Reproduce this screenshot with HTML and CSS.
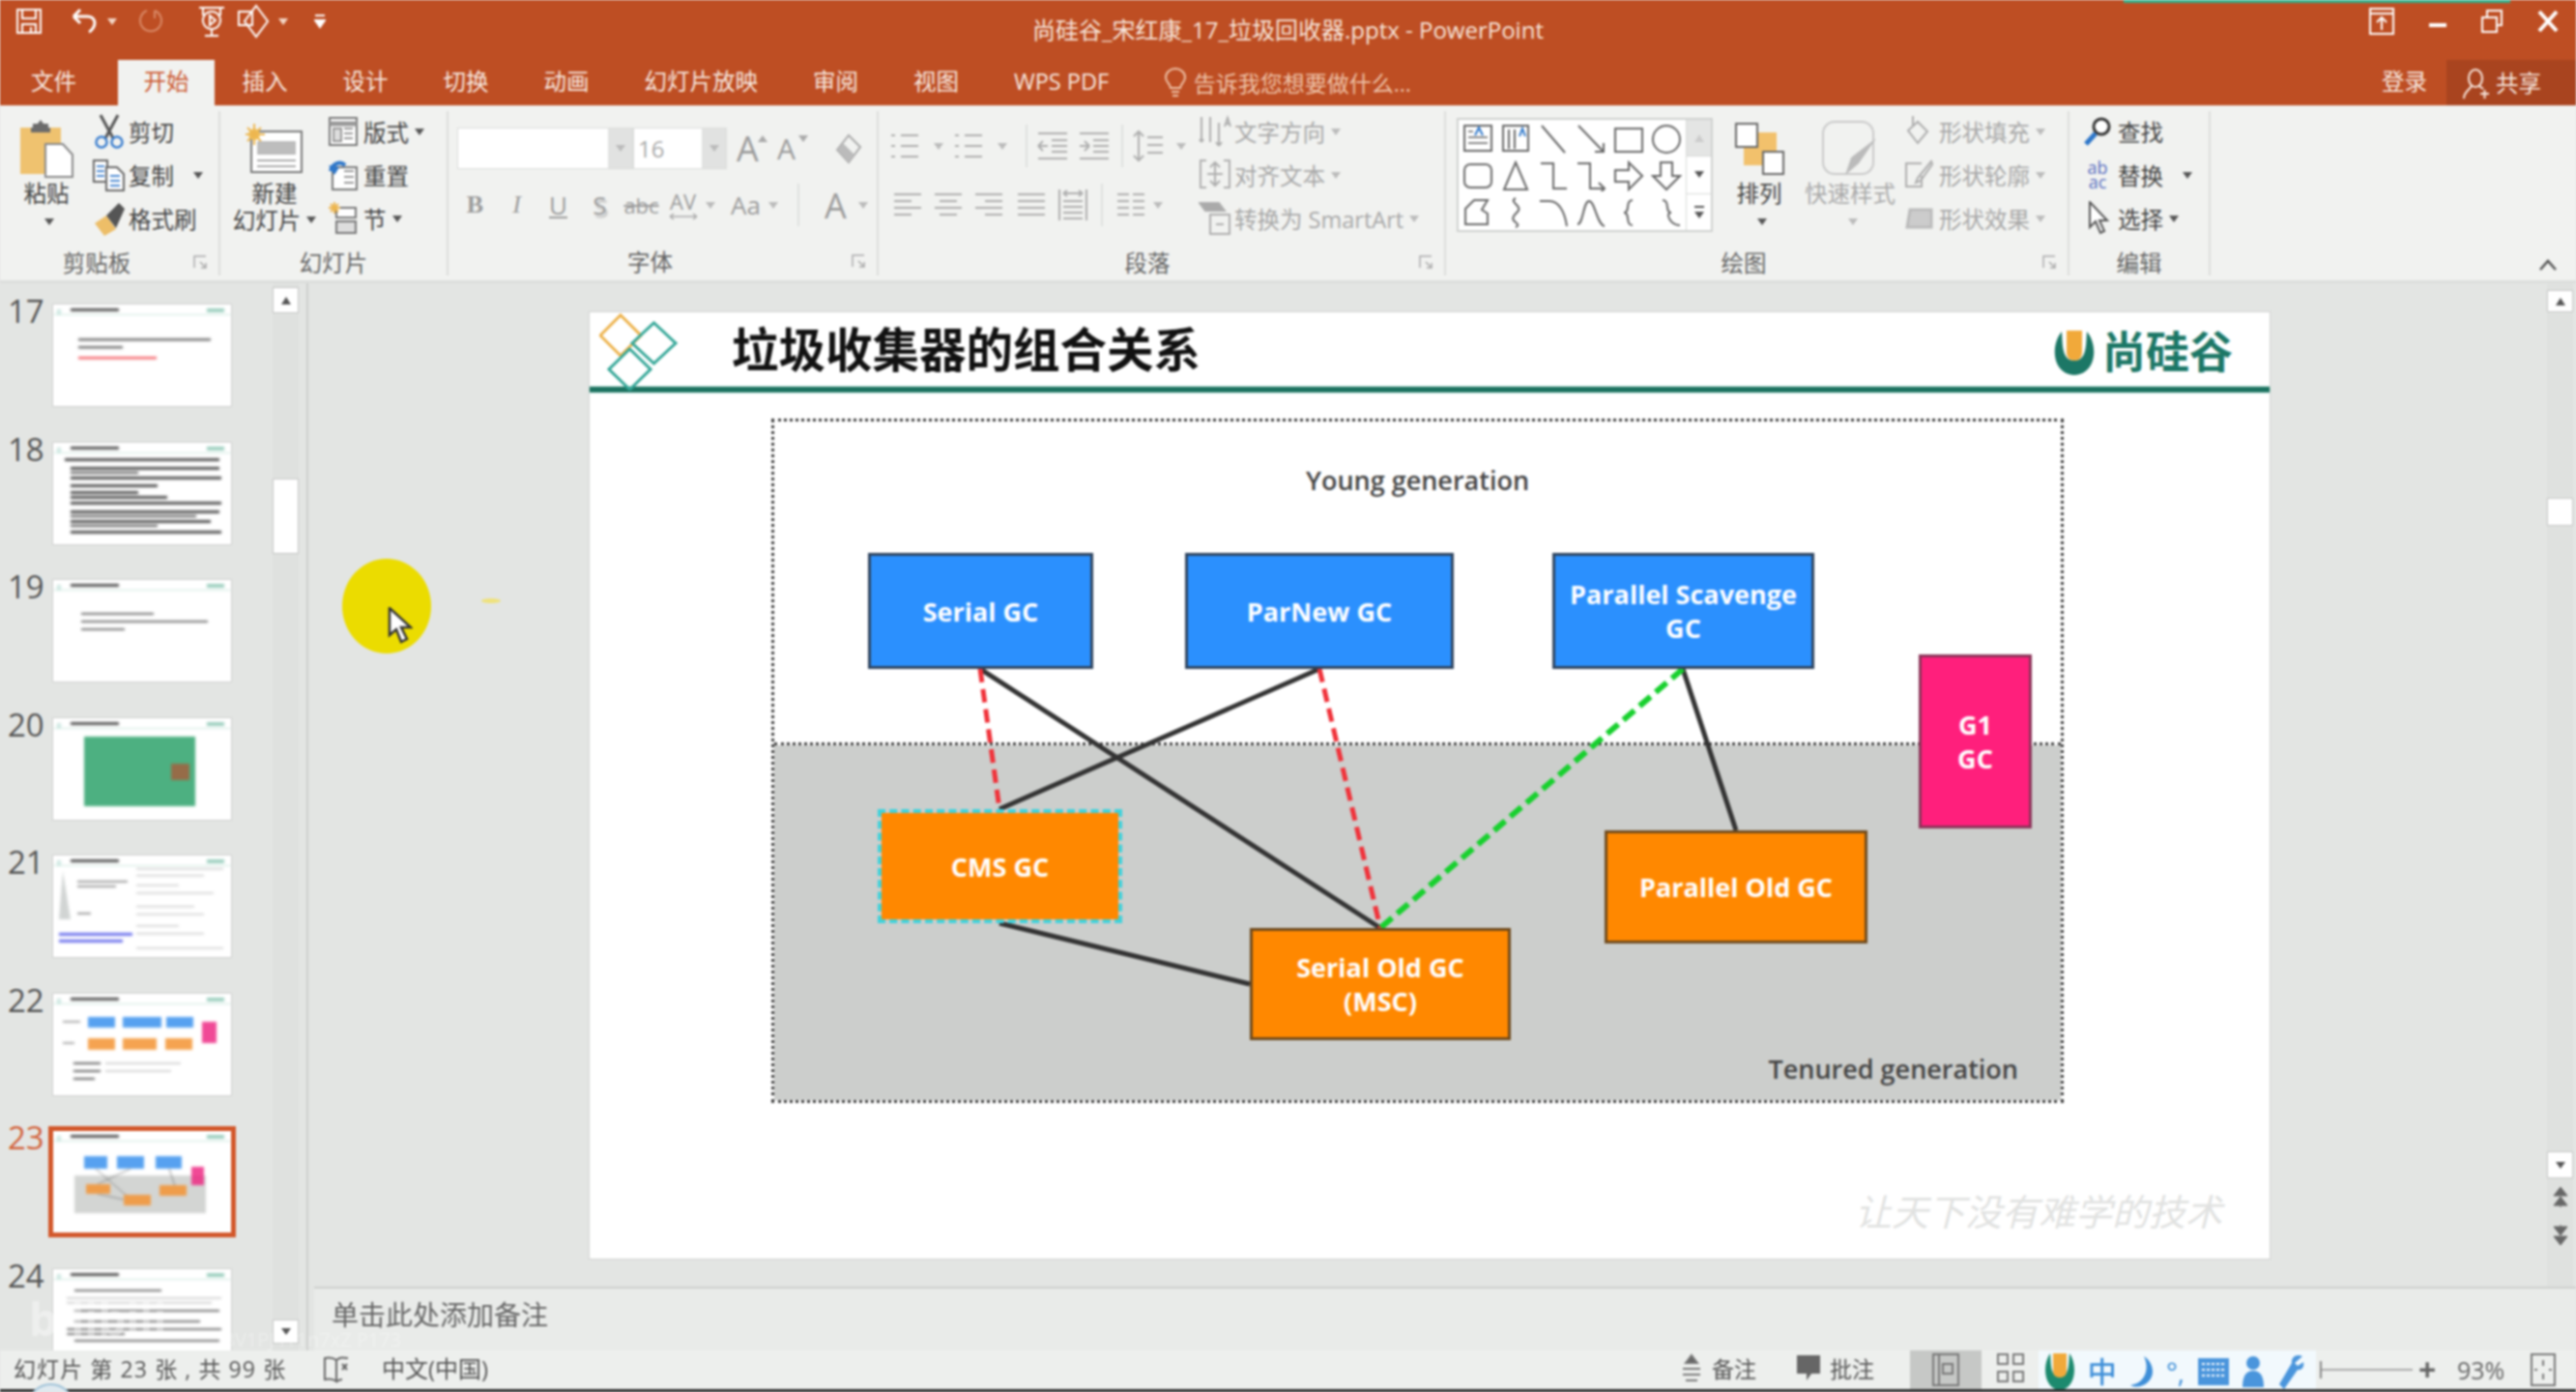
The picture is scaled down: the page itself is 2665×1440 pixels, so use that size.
FILE: index.html
```html
<!DOCTYPE html>
<html lang="zh-CN">
<head>
  <meta charset="UTF-8">
  <title>尚硅谷_宋红康_17_垃圾回收器.pptx - PowerPoint</title>
  <link rel="stylesheet" href="styles.css">
</head>
<body>
<svg class="defs" width="0" height="0">
  <symbol id="thumb-head" viewBox="0 0 184 105">
    <path d="M6 5l2 2-2 3-2-3z" fill="none" stroke="#7fc4b4"/>
    <rect x="18" y="4" width="50" height="3" fill="#333"/>
    <rect x="0" y="10" width="184" height="1" fill="#bfe0d6"/>
    <rect x="159" y="4" width="18" height="4" fill="#8cc7b4"/>
  </symbol>
</svg>
<div class="app">
  <header class="titlebar">
    <div class="qat">
      <svg class="ic" width="28" height="28" viewBox="0 0 28 28"><path d="M2 2h24v24H2zM7 2v9h14V2M7 26v-9h14v9M16 20v6"/></svg>
      <svg class="ic undo" width="30" height="30" viewBox="0 0 30 30"><path d="M4 10h14c6 0 8 4 8 7s-3 8-6 9M4 10l7-7M4 10l7 7" stroke-width="3"/></svg>
      <i class="tiny-caret"></i>
      <svg class="ic redo" width="26" height="30" viewBox="0 0 26 30"><path d="M17 4a11 11 0 1 1-8 0M17 4v8"/></svg>
      <svg class="ic show" width="30" height="32" viewBox="0 0 30 32"><path d="M2 2h26M6 3v7M24 3v7M15 24a9 9 0 1 0-.1 0zM13 10l6 5-6 5zM15 24v6M8 31h14"/></svg>
      <svg class="ic" width="34" height="36" viewBox="0 0 34 36"><path d="M2 8h14v14H2zM20 2l12 16-12 16L8 18z"/></svg>
      <i class="tiny-caret"></i>
      <svg class="ic more" width="12" height="18" viewBox="0 0 12 18"><path d="M1 3h10" /><path d="M1 8h10l-5 7z" fill="#fff"/></svg>
    </div>
    <div class="doc-title">尚硅谷_宋红康_17_垃圾回收器.pptx - PowerPoint</div>
    <div class="win-btns">
      <svg class="ic" width="28" height="30" viewBox="0 0 28 30"><path d="M2 2h24v26H2zM2 7h24M14 24V12M9 16l5-5 5 5"/></svg>
      <svg class="ic" width="20" height="30" viewBox="0 0 20 30"><path d="M1 19h18" stroke-width="4"/></svg>
      <svg class="ic" width="24" height="30" viewBox="0 0 24 30"><path d="M2 11h15v15H2zM7 11V4h15v15h-5"/></svg>
      <svg class="ic" width="24" height="30" viewBox="0 0 24 30"><path d="M3 5l18 20M21 5L3 25" stroke-width="4"/></svg>
    </div>
  </header>
  <nav class="tabs">
    <span class="tab tab-file">文件</span>
    <span class="tab tab-on">开始</span>
    <span class="tab">插入</span>
    <span class="tab">设计</span>
    <span class="tab">切换</span>
    <span class="tab">动画</span>
    <span class="tab">幻灯片放映</span>
    <span class="tab">审阅</span>
    <span class="tab">视图</span>
    <span class="tab">WPS PDF</span>
    <span class="tell">
      <svg class="ic" width="24" height="32" viewBox="0 0 24 32"><path d="M7 21c0-4-5-6-5-11a10 9 0 0 1 20 0c0 5-5 7-5 11zM8 25h8M9 29h6"/></svg>
      告诉我您想要做什么...
    </span>
    <span class="login">登录</span>
    <span class="share">
      <svg class="ic" width="30" height="34" viewBox="0 0 30 34"><path d="M8 12a7 9 0 1 0 14 0a7 9 0 1 0-14 0M11 19c0 4-8 6-8 14M19 19c0 2 3 3 4 4M20 28h9M24.500 24v9"/></svg>
      共享
    </span>
  </nav>

  <section class="ribbon">
    <div class="group g-clip">
      <div class="group-body">
        <div class="big big-paste">
          <svg width="56" height="62" viewBox="0 0 56 62"><path d="M1 9h42v48H1z" fill="#EFC26F"/><path d="M14 9V5h5l3-4 3 4h5v4h2v5H12V9z" fill="#6b6b6b"/><path d="M27 26h18l10 11v23H27z" fill="#fff" stroke="#888" stroke-width="2"/></svg>
          <span class="big-label">粘贴</span>
          <i class="caret"></i>
        </div>
        <div class="col">
          <div class="sm"><svg width="34" height="36" viewBox="0 0 34 36" class="sm-ic"><path d="M8 1l13 24M26 1L13 25" stroke="#555" stroke-width="3" fill="none"/><circle cx="9" cy="29" r="5.500" fill="none" stroke="#3C7FCF" stroke-width="2.500"/><circle cx="25" cy="29" r="5.500" fill="none" stroke="#3C7FCF" stroke-width="2.500"/></svg>剪切</div>
          <div class="sm"><svg width="34" height="34" viewBox="0 0 34 34" class="sm-ic"><path d="M1 2h14v22H1z" fill="#fff" stroke="#666" stroke-width="2"/><path d="M14 9h11l7 7v17H14z" fill="#fff" stroke="#666" stroke-width="2"/><path d="M4 8h8M4 13h8M4 18h8M18 18h10M18 23h10M18 28h10" stroke="#4D8AD2" stroke-width="2"/></svg>复制<i class="caret caret-gap"></i></div>
          <div class="sm"><svg width="34" height="38" viewBox="0 0 34 38" class="sm-ic"><path d="M2 24l12-8 10 14-12 7z" fill="#EDBE68"/><path d="M14 16L27 3l6 6-9 20z" fill="#555"/></svg>格式刷</div>
        </div>
      </div>
      <div class="group-label has-launcher"><span>剪贴板</span><svg width="14" height="14" viewBox="0 0 14 14" class="launcher"><path d="M1 13V1h12M7 7l6 6M13 8v5H8"/></svg></div>
    </div>

    <div class="group g-slides">
      <div class="group-body">
        <div class="big big-new">
          <svg width="60" height="52" viewBox="0 0 60 52"><path d="M6 8h52v42H6z" fill="#fff" stroke="#777" stroke-width="2"/><path d="M12 18h40v14H12z" fill="#BDBDBD"/><path d="M12 38h40M12 44h40" stroke="#aaa" stroke-width="2"/><circle cx="9" cy="11" r="6" fill="#F0C35F"/><path d="M9 0v22M0 11h20M2 4l14 14M16 4L2 18" stroke="#EDB64F" stroke-width="2"/></svg>
          <span class="big-label">新建</span>
          <span class="big-label second">幻灯片<i class="caret"></i></span>
        </div>
        <div class="col">
          <div class="sm"><svg width="30" height="30" viewBox="0 0 30 30" class="sm-ic"><path d="M1 1h28v28H1z" fill="#fff" stroke="#777" stroke-width="2"/><path d="M1 7h28" stroke="#999" stroke-width="5"/><path d="M5 12h8v13H5zM16 12h9M16 17h9M16 22h9" fill="#ddd" stroke="#999" stroke-width="2"/></svg>版式<i class="caret"></i></div>
          <div class="sm"><svg width="30" height="32" viewBox="0 0 30 32" class="sm-ic"><path d="M4 8h25v23H4z" fill="#fff" stroke="#777" stroke-width="2"/><path d="M16 12h10M16 18h10M16 24h10" stroke="#999" stroke-width="2"/><path d="M2 12C4 4 12 1 17 6" fill="none" stroke="#2D76C9" stroke-width="4"/><path d="M0 6l6 10 5-8z" fill="#2D76C9"/></svg>重置</div>
          <div class="sm"><svg width="30" height="34" viewBox="0 0 30 34" class="sm-ic"><path d="M8 6h20v10H8z" fill="#fff" stroke="#777" stroke-width="2"/><path d="M8 20h20v12H8z" fill="#ddd" stroke="#777" stroke-width="2"/><path d="M6 0v12M0 6h12M2 2l8 8M10 2l-8 8" stroke="#EDB64F" stroke-width="2"/></svg>节<i class="caret"></i></div>
        </div>
      </div>
      <div class="group-label"><span>幻灯片</span></div>
    </div>

    <div class="group g-font">
      <div class="group-body stack">
        <div class="font-row">
          <div class="combo combo-name"><i class="caret dim"></i></div>
          <div class="combo combo-size"><span>16</span><i class="caret dim"></i></div>
          <span class="grow">A<i></i></span>
          <span class="grow small">A<i class="down"></i></span>
          <svg width="32" height="34" viewBox="0 0 32 34" class="clear-ic"><path d="M4 18L16 3l12 12-12 16z" fill="none" stroke="#aaa" stroke-width="2"/><path d="M4 18l12 13 6-8-12-12z" fill="#bbb"/></svg>
        </div>
        <div class="font-row second-row">
          <b class="fbtn">B</b>
          <em class="fbtn">I</em>
          <u class="fbtn">U</u>
          <span class="fbtn shadowed">S</span>
          <s class="fbtn abc">abc</s>
          <span class="fbtn av">AV<svg width="30" height="8" viewBox="0 0 30 8"><path d="M1 4h28M1 4l4-3M1 4l4 3M29 4l-4-3M29 4l-4 3" fill="none" stroke="#aaa" stroke-width="1.500"/></svg></span>
          <i class="caret dim fcaret"></i>
          <span class="fbtn aa">Aa</span>
          <i class="caret dim fcaret"></i>
          <span class="vsep font-sep"></span>
          <span class="fbtn bigger">A</span>
          <i class="caret dim fcaret"></i>
        </div>
      </div>
      <div class="group-label has-launcher"><span>字体</span><svg width="14" height="14" viewBox="0 0 14 14" class="launcher"><path d="M1 13V1h12M7 7l6 6M13 8v5H8"/></svg></div>
    </div>

    <div class="group g-para">
      <div class="group-body">
        <div class="para-left">
          <div class="para-row">
            <svg class="pi" width="36" height="30" viewBox="0 0 36 30"><path d="M2 4h4M12 4h18M2 15h4M12 15h18M2 26h4M12 26h18"/></svg><i class="caret dim pcaret"></i>
            <svg class="pi" width="36" height="30" viewBox="0 0 36 30"><path d="M2 4h4M12 4h18M2 15h4M12 15h18M2 26h4M12 26h18"/></svg><i class="caret dim pcaret"></i>
            <span class="vsep"></span>
            <svg class="pi" width="36" height="30" viewBox="0 0 36 30"><path d="M2 2h30M16 9h16M16 15h16M16 21h16M2 28h30M2 15h10M2 15l5-5M2 15l5 5"/></svg>
            <svg class="pi gap7" width="36" height="30" viewBox="0 0 36 30"><path d="M2 2h30M16 9h16M16 15h16M16 21h16M2 28h30M2 15h10M12 15l-5-5M12 15l-5 5"/></svg>
            <span class="vsep"></span>
            <svg class="pi" width="36" height="34" viewBox="0 0 36 34"><path d="M16 8h16M16 16h16M16 24h16M7 2v30M2 7l5-5 5 5M2 27l5 5 5-5"/></svg><i class="caret dim pcaret"></i>
          </div>
          <div class="para-row row-two">
            <svg class="pi" width="36" height="30" viewBox="0 0 36 30"><path d="M5 4h28M5 11h18M5 18h28M5 25h18"/></svg>
            <svg class="pi gap7" width="36" height="30" viewBox="0 0 36 30"><path d="M4 4h28M9 11h18M4 18h28M9 25h18"/></svg>
            <svg class="pi gap7" width="36" height="30" viewBox="0 0 36 30"><path d="M3 4h28M13 11h18M3 18h28M13 25h18"/></svg>
            <svg class="pi gap7" width="36" height="30" viewBox="0 0 36 30"><path d="M4 4h28M4 11h28M4 18h28M4 25h28"/></svg>
            <svg class="pi gap7" width="36" height="36" viewBox="0 0 36 36"><path d="M4 2v32M32 2v32M8 6h20M8 6l4-3M8 6l4 3M28 6l-4-3M28 6l-4 3M8 14h20M8 20h20M8 26h20M8 32h20"/></svg>
            <span class="vsep sep-two"></span>
            <svg class="pi" width="36" height="30" viewBox="0 0 36 30"><path d="M4 4h12M20 4h12M4 11h12M20 11h12M4 18h12M20 18h12M4 25h12M20 25h12"/></svg><i class="caret dim pcaret narrow"></i>
          </div>
        </div>
        <div class="col dim-col">
          <div class="sm"><svg class="pi sm-ic" width="34" height="34" viewBox="0 0 34 34"><path d="M3 2v26M12 2v26M21 8v24M21 32l-3-4M21 32l3-4M3 28l-2-3M3 28l2-3M27 12l3-9 3 9M28 9h4"/></svg>文字方向<i class="caret dim"></i></div>
          <div class="sm"><svg class="pi sm-ic" width="34" height="34" viewBox="0 0 34 34"><path d="M8 2H2v28h6M26 2h6v28h-6M17 4v24M12 9l5-5 5 5M12 23l5 5 5-5M9 16h16"/></svg>对齐文本<i class="caret dim"></i></div>
          <div class="sm"><svg class="pi sm-ic" width="34" height="36" viewBox="0 0 34 36"><path d="M1 2h20l6 8H7z" fill="#aaa"/><path d="M12 14h20v20H12zM18 24h8"/></svg>转换为 SmartArt<i class="caret dim"></i></div>
        </div>
      </div>
      <div class="group-label has-launcher"><span>段落</span><svg width="14" height="14" viewBox="0 0 14 14" class="launcher"><path d="M1 13V1h12M7 7l6 6M13 8v5H8"/></svg></div>
    </div>

    <div class="group g-draw">
      <div class="group-body">
        <div class="gallery">
          <div class="gallery-cells">
            <svg class="si" viewBox="0 0 32 32"><path d="M2 2h28v26H2z" fill="#fff"/><path d="M6 8h5M6 14h20M6 20h20" stroke="#888"/><path d="M13 12l4-8 4 8" stroke="#2D76C9"/></svg>
            <svg class="si" viewBox="0 0 32 32"><path d="M3 2h26v26H3zM9 6v20M15 6v20"/><path d="M20 13l3-8 3 8" stroke="#2D76C9"/></svg>
            <svg class="si" viewBox="0 0 32 32"><path d="M4 2l24 28"/></svg>
            <svg class="si" viewBox="0 0 32 32"><path d="M3 2l26 27M29 20v9h-9"/></svg>
            <svg class="si" viewBox="0 0 32 32"><path d="M2 5h28v24H2z"/></svg>
            <svg class="si" viewBox="0 0 32 32"><circle cx="16" cy="16" r="14"/></svg>
            <svg class="si" viewBox="0 0 32 32"><rect x="2" y="4" width="28" height="24" rx="6"/></svg>
            <svg class="si" viewBox="0 0 32 32"><path d="M16 2l12 28H4z"/></svg>
            <svg class="si" viewBox="0 0 32 32"><path d="M3 3h13v26h14"/></svg>
            <svg class="si" viewBox="0 0 32 32"><path d="M2 3h13v26h14M24 23l6 6-6 6"/></svg>
            <svg class="si" viewBox="0 0 32 32"><path d="M2 10h14V2l14 14-14 14v-8H2z"/></svg>
            <svg class="si" viewBox="0 0 32 32"><path d="M10 2h12v14h8L16 30 2 16h8z"/></svg>
            <svg class="si" viewBox="0 0 32 32"><path d="M3 12L12 3h14l-6 10 6 4v11H3z"/></svg>
            <svg class="si" viewBox="0 0 32 32"><path d="M16 1c-8 4 8 8 2 14s-6 8-2 11 2 4 0 5"/></svg>
            <svg class="si" viewBox="0 0 32 32"><path d="M2 4h10c10 0 16 12 18 26"/></svg>
            <svg class="si" viewBox="0 0 32 32"><path d="M2 28C8 28 8 4 14 4s8 24 16 26"/></svg>
            <svg class="si" viewBox="0 0 32 32"><path d="M20 3c-8 0-2 13-9 13 7 0 1 13 9 13"/></svg>
            <svg class="si" viewBox="0 0 32 32"><path d="M12 3c8 0 2 13 9 13-7 0-1 13 9 13"/></svg>
          </div>
          <div class="gallery-scroll">
            <span class="gs gs-up"><i class="caret up dim"></i></span>
            <span class="gs"><i class="caret"></i></span>
            <span class="gs gs-last"><i class="bar"></i><i class="caret"></i></span>
          </div>
        </div>
        <div class="big big-arrange">
          <svg width="52" height="54" viewBox="0 0 52 54"><path d="M10 10h34v34H10z" fill="#F2C16C"/><path d="M2 1h22v24H2zM30 30h21v23H30z" fill="#fff" stroke="#666" stroke-width="2"/></svg>
          <span class="big-label">排列</span>
          <i class="caret"></i>
        </div>
        <div class="big big-style">
          <svg width="58" height="58" viewBox="0 0 58 58" class="qs"><rect x="1" y="1" width="52" height="54" rx="12" fill="none" stroke="#c9c9c9" stroke-width="2"/><path d="M56 18L38 44l-14 12 6-18z" fill="#bbb"/></svg>
          <span class="big-label">快速样式</span>
          <i class="caret dim"></i>
        </div>
        <div class="col dim-col">
          <div class="sm"><svg class="pi sm-ic" width="30" height="34" viewBox="0 0 30 34"><path d="M9 1v10M4 16L14 7l10 10-10 12z"/></svg>形状填充<i class="caret dim"></i></div>
          <div class="sm"><svg class="pi sm-ic" width="30" height="34" viewBox="0 0 30 34"><path d="M18 5H2v24h16V18M28 3L14 20l-2 5 5-2L29 6z"/></svg>形状轮廓<i class="caret dim"></i></div>
          <div class="sm"><svg width="30" height="34" viewBox="0 0 30 34" class="sm-ic"><path d="M6 8h22v18H3z" fill="#ccc" stroke="#bbb" stroke-width="3"/></svg>形状效果<i class="caret dim"></i></div>
        </div>
      </div>
      <div class="group-label has-launcher"><span>绘图</span><svg width="14" height="14" viewBox="0 0 14 14" class="launcher"><path d="M1 13V1h12M7 7l6 6M13 8v5H8"/></svg></div>
    </div>

    <div class="group g-edit">
      <div class="group-body">
        <div class="col">
          <div class="sm"><svg width="30" height="32" viewBox="0 0 30 32" class="sm-ic"><circle cx="19" cy="11" r="8" fill="#fff" stroke="#333" stroke-width="3"/><path d="M13 18L3 29" stroke="#2D76C9" stroke-width="5"/></svg>查找</div>
          <div class="sm"><span class="replace-ic sm-ic">ab<br>ac</span>替换<i class="caret caret-gap"></i></div>
          <div class="sm"><svg width="30" height="36" viewBox="0 0 30 36" class="sm-ic"><path d="M7 1v26l6-6 5 12 4-2-5-11h8z" fill="#fff" stroke="#555" stroke-width="2"/></svg>选择<i class="caret"></i></div>
        </div>
      </div>
      <div class="group-label"><span>编辑</span></div>
    </div>

    <div class="ribbon-end">
      <svg class="collapse" width="20" height="14" viewBox="0 0 20 14"><path d="M2 12l8-9 8 9"/></svg>
    </div>
  </section>

  <main class="main">
    <aside class="thumbs-pane">
      <div class="thumbs">
        <div class="thumb-row"><span class="num">17</span>
          <svg class="thumb" viewBox="0 0 184 105"><use href="#thumb-head"/><g fill="#555"><rect x="26" y="35" width="137" height="2.500"/><rect x="26" y="43" width="46" height="2.500"/></g><rect x="26" y="54" width="81" height="2.500" fill="#F2454D"/></svg></div>
        <div class="thumb-row"><span class="num">18</span>
          <svg class="thumb" viewBox="0 0 184 105"><use href="#thumb-head"/><g fill="#333"><rect x="12" y="16" width="160" height="3"/><rect x="18" y="25" width="154" height="3"/><rect x="18" y="30" width="70" height="2"/><rect x="18" y="35" width="156" height="3"/><rect x="18" y="43" width="90" height="3"/><rect x="18" y="50" width="70" height="3"/><rect x="18" y="55" width="100" height="3"/><rect x="18" y="61" width="156" height="3"/><rect x="18" y="70" width="154" height="3"/><rect x="18" y="75" width="130" height="2"/><rect x="18" y="80" width="145" height="3"/><rect x="18" y="85" width="90" height="2"/><rect x="18" y="91" width="156" height="3"/></g></svg></div>
        <div class="thumb-row"><span class="num">19</span>
          <svg class="thumb" viewBox="0 0 184 105"><use href="#thumb-head"/><g fill="#555"><rect x="29" y="34" width="75" height="2"/><rect x="29" y="42" width="131" height="2"/><rect x="29" y="50" width="45" height="2"/></g></svg></div>
        <div class="thumb-row"><span class="num">20</span>
          <svg class="thumb" viewBox="0 0 184 105"><use href="#thumb-head"/><rect x="32" y="19" width="115" height="72" fill="#2EA36C"/><rect x="122" y="47" width="19" height="17" fill="#A3613F"/></svg></div>
        <div class="thumb-row"><span class="num">21</span>
          <svg class="thumb" viewBox="0 0 184 105"><use href="#thumb-head"/><path d="M10 16l8 50H6z" fill="#C9CDCC"/><g fill="#888"><rect x="25" y="26" width="52" height="2"/><rect x="25" y="31" width="40" height="2"/><rect x="25" y="59" width="14" height="2"/></g><g fill="#C2C2C2"><rect x="86" y="13" width="90" height="1.500"/><rect x="86" y="20" width="70" height="1.500"/><rect x="86" y="30" width="44" height="1.500"/><rect x="86" y="38" width="80" height="1.500"/><rect x="86" y="52" width="60" height="1.500"/><rect x="86" y="60" width="70" height="1.500"/><rect x="86" y="72" width="44" height="1.500"/><rect x="86" y="80" width="70" height="1.500"/><rect x="86" y="95" width="90" height="1.500"/></g><g fill="#4F55E8"><rect x="6" y="80" width="76" height="3"/><rect x="6" y="87" width="66" height="3"/></g></svg></div>
        <div class="thumb-row"><span class="num">22</span>
          <svg class="thumb" viewBox="0 0 184 105"><use href="#thumb-head"/><g fill="#3A91EE"><rect x="36" y="24" width="28" height="11"/><rect x="72" y="24" width="40" height="11"/><rect x="117" y="24" width="28" height="11"/></g><g fill="#F49433"><rect x="36" y="46" width="28" height="12"/><rect x="72" y="46" width="35" height="12"/><rect x="116" y="46" width="28" height="12"/></g><rect x="154" y="29" width="15" height="22" fill="#EE2A84"/><g fill="#999"><rect x="10" y="28" width="18" height="2"/><rect x="10" y="50" width="12" height="2"/></g><g fill="#444"><rect x="21" y="71" width="28" height="2"/><rect x="21" y="79" width="28" height="2"/><rect x="21" y="87" width="22" height="2"/></g><g fill="#ccc"><rect x="54" y="71" width="78" height="2"/><rect x="54" y="79" width="68" height="2"/></g></svg></div>
        <div class="thumb-row row-active"><span class="num">23</span>
          <svg class="thumb" viewBox="0 0 184 105"><use href="#thumb-head"/><rect x="22" y="46" width="136" height="39" fill="#CCCECC"/><g fill="#3A91EE"><rect x="32" y="26" width="24" height="13"/><rect x="66" y="26" width="28" height="13"/><rect x="106" y="26" width="27" height="13"/></g><rect x="143" y="37" width="13" height="19" fill="#EE2A84"/><path d="M44 39l32 28M80 39L46 55M120 39l6 18M46 65l27 6" stroke="#777" fill="none"/><g fill="#F49433"><rect x="34" y="55" width="25" height="10"/><rect x="73" y="66" width="28" height="11"/><rect x="110" y="56" width="28" height="11"/></g></svg></div>
        <div class="thumb-row"><span class="num">24</span>
          <svg class="thumb" viewBox="0 0 184 105"><use href="#thumb-head"/><g fill="#555"><rect x="22" y="21" width="90" height="2"/><rect x="22" y="42" width="150" height="2"/><rect x="22" y="53" width="130" height="2"/><rect x="14" y="61" width="160" height="2"/><rect x="14" y="66" width="60" height="2"/><rect x="22" y="73" width="150" height="2"/></g><g fill="#bbb"><rect x="14" y="29" width="160" height="1.500"/><rect x="14" y="34" width="150" height="1.500"/></g></svg></div>
      </div>
      <div class="vscroll">
        <span class="sb-btn"><i class="caret up"></i></span>
        <span class="sb-thumb"></span>
        <span class="sb-fill"></span>
        <span class="sb-btn sb-down"><i class="caret"></i></span>
      </div>
    </aside>

    <div class="editor">
      <div class="canvas">
        <div class="canvas-area">
          <article class="slide">
            <div class="slide-head">
              <svg class="slide-mark" width="82" height="80" viewBox="0 0 82 80"><g fill="none" stroke-width="3"><path d="M22 2L43 23 22 44 1 23z" stroke="#EDB24B"/><path d="M56.500 10L79 31 56.500 52 34 31z" stroke="#35A798"/><path d="M31.500 37L53 58 31.500 79 10 58z" stroke="#35A798"/></g></svg>
              <h1 class="slide-title">垃圾收集器的组合关系</h1>
              <div class="brand">
                <svg width="46" height="48" viewBox="0 0 46 48"><path d="M10 2C-2 16 0 46 23 47c23-1 25-31 13-45-1 14 0 30-13 30S11 16 10 2z" fill="#1C7766"/><path d="M15 1h16v22c0 6-3 9-8 9s-8-3-8-9z" fill="#F1A93A"/></svg>
                <span>尚硅谷</span>
              </div>
            </div>
            <div class="slide-rule"></div>
            <div class="diagram">
              <div class="young"><span class="gen-label">Young generation</span></div>
              <div class="tenured"><span class="gen-label">Tenured generation</span></div>
              <svg class="links" viewBox="0 0 1337 706">
                <g class="link-solid">
                  <path d="M216 257L630 525"/>
                  <path d="M567 257L236 402"/>
                  <path d="M943 257L998 424"/>
                  <path d="M236 520L495 583"/>
                </g>
                <g class="link-red">
                  <path d="M216 257L236 402"/>
                  <path d="M567 257L630 525"/>
                </g>
                <path class="link-green" d="M943 257L630 525"/>
              </svg>
              <div class="node blue n-serial">Serial GC</div>
              <div class="node blue n-parnew">ParNew GC</div>
              <div class="node blue n-scav">Parallel Scavenge<br>GC</div>
              <div class="node pink n-g1">G1<br>GC</div>
              <div class="node orange n-cms">CMS GC</div>
              <div class="node orange n-sold">Serial Old GC<br>(MSC)</div>
              <div class="node orange n-pold">Parallel Old GC</div>
            </div>
            <div class="slogan">让天下没有难学的技术</div>
          </article>
        </div>
        <div class="rscroll">
          <span class="sb-btn r-up"><i class="caret up"></i></span>
          <span class="sb-thumb r-thumb"></span>
          <span class="sb-fill"></span>
          <span class="sb-btn r-down"><i class="caret"></i></span>
          <svg class="page-arrows" width="20" height="72" viewBox="0 0 20 72"><path d="M10 2l7 9H3zM10 12l7 9H3zM10 13v10M10 62l7-9H3zM10 52l7-9H3zM10 51V41" fill="#666" stroke="#666"/></svg>
        </div>
      </div>
      <div class="notes">单击此处添加备注</div>
    </div>
  </main>

  <footer class="statusbar">
    <span class="st-count">幻灯片 第 23 张 , 共 99 张</span>
    <svg class="st-book" width="28" height="30" viewBox="0 0 28 30"><path d="M14 5C10 2 6 2 2 3v22c4-1 8-1 12 2zM14 5c4-3 6-3 12-2M14 27c2-1 4-2 6-2M20 9l5 6M25 9l-5 6"/></svg>
    <span class="st-lang">中文(中国)</span>
    <span class="st-spacer"></span>
    <span class="st-item"><svg class="st-ic" width="24" height="30" viewBox="0 0 24 30"><path d="M3 16h18M3 22h18M6 28h12" /><path d="M12 2l6 8H6z" fill="#666"/></svg>备注</span>
    <span class="st-item st-comment"><svg width="26" height="30" viewBox="0 0 26 30"><path d="M1 2h24v19H16l-5 7v-7H1z" fill="#666"/></svg>批注</span>
    <span class="st-view"><svg class="st-ic" width="30" height="36" viewBox="0 0 30 36"><path d="M2 2h26v32H2zM8 2v32M12 12h10v10H12z"/></svg></span>
    <span class="st-sorter"><svg class="st-ic" width="30" height="34" viewBox="0 0 30 34"><path d="M2 3h10v10H2zM18 3h10v10H18zM2 21h10v10H2zM18 21h10v10H18z"/></svg></span>
    <div class="ime">
      <svg width="32" height="40" viewBox="0 0 32 40"><path d="M6 1C-3 14 0 38 16 39c16-1 19-25 10-38-1 12 0 24-10 24S7 13 6 1z" fill="#1C8A6E"/><path d="M9 1h14v18c0 5-3 7-7 7s-7-2-7-7z" fill="#F1A93A"/></svg>
      <span class="ime-zh">中</span>
      <svg width="26" height="34" viewBox="0 0 26 34"><path d="M16 1c6 12 2 28-14 30 10 5 23-3 23-14 0-7-4-13-9-16z" fill="#3F8FD8"/></svg>
      <span class="ime-punct">°,</span>
      <svg width="34" height="30" viewBox="0 0 34 30"><path d="M1 1h32v28H1z" fill="#4A95DC"/><path d="M5 7h24M5 13h24M5 19h24" stroke="#fff" stroke-width="2" stroke-dasharray="3 2"/></svg>
      <svg width="24" height="36" viewBox="0 0 24 36"><circle cx="12" cy="9" r="7" fill="#4A95DC"/><path d="M1 34c0-12 4-17 11-17s11 5 11 17z" fill="#4A95DC"/></svg>
      <svg width="28" height="38" viewBox="0 0 28 38"><path d="M26 3c-6-3-12 1-11 7L2 32l5 5 14-20c5 1 7-4 6-8l-6 4-3-3z" fill="#4A95DC"/></svg>
    </div>
    <div class="zoom">
      <span class="zoom-track"><i></i></span>
      <span class="zoom-plus">+</span>
      <span class="zoom-val">93%</span>
      <svg class="st-ic" width="28" height="36" viewBox="0 0 28 36"><path d="M2 2h24v32H2zM14 8v6M14 22v6M8 18h-3M23 18h-3"/></svg>
    </div>
  </footer>
  <div class="statusbar-edge"></div>

  <div class="pointer-spot"></div>
  <div class="pointer-streak"></div>
  <svg class="pointer" width="26" height="38" viewBox="0 0 26 38"><path d="M2 1v28l7-6 5 13 6-3-6-12h10z" fill="#fff" stroke="#333" stroke-width="2.500"/></svg>
  <div class="corner-arc"></div>
  <span class="mark-site">bilibili</span>
  <span class="mark-id">BV1PJ411n7xZ P173</span>
</div>
</body>
</html>
```

FILE: styles.css
```css
/* whole window, slightly soft because the source is a video frame */
html, body {
  margin: 0;
  padding: 0;
  width: 2665px;
  height: 1440px;
  overflow: hidden;
  background: #e3e5e3;
}
body {
  font-family: "Open Sans", "Noto Sans CJK SC", sans-serif;
  color: #444;
}
.defs {
  position: absolute;
}
.app {
  position: relative;
  display: flex;
  flex-direction: column;
  width: 2665px;
  height: 1440px;
  overflow: hidden;
  filter: blur(1px);
}
.ic {
  fill: none;
  stroke: currentColor;
  stroke-width: 2;
}

/* title bar */
.titlebar {
  display: grid;
  grid-template-columns: 1fr auto 1fr;
  align-items: center;
  height: 62px;
  background: #be4e23;
  color: #fff;
}
.qat {
  display: flex;
  align-items: center;
  padding: 0 0 18px 16px;
}
.undo { margin-left: 28px; }
.redo { margin-left: 22px; color: #d98a68; }
.show { margin-left: 35px; }
.qat .show + svg { margin-left: 11px; }
.more { margin-left: 27px; }
.tiny-caret {
  width: 0;
  height: 0;
  margin-left: 9px;
  border: 5px solid transparent;
  border-top: 7px solid #f4d8c8;
  border-bottom: 0;
}
.doc-title {
  padding-bottom: 4px;
  font-size: 24px;
  color: #f8e6dc;
  white-space: nowrap;
}
.win-btns {
  display: flex;
  justify-content: flex-end;
  align-items: center;
  gap: 34px;
  padding: 0 17px 18px 0;
}

/* tabs */
.tabs {
  display: flex;
  align-items: stretch;
  height: 47px;
  background: #be4e23;
  color: #f8e9e0;
  font-size: 23.500px;
  line-height: 44px;
}
.tab {
  padding: 0 28.500px;
  white-space: nowrap;
}
.tab-file {
  padding: 0 43px 0 32px;
}
.tab-on {
  padding: 0 26.500px;
  background: #f1f2f0;
  color: #cc5a33;
}
.tell {
  display: flex;
  align-items: center;
  gap: 7px;
  margin-left: 28px;
  font-size: 23px;
  color: #eec2a8;
}
.login {
  margin-left: auto;
  margin-right: 20px;
}
.share {
  display: flex;
  align-items: center;
  gap: 6px;
  width: 134px;
  box-sizing: border-box;
  padding-left: 15px;
  background: #a9441f;
}

/* ribbon */
.ribbon {
  display: flex;
  height: 181px;
  box-sizing: border-box;
  padding-top: 6px;
  background: #f1f2f0;
}
.group {
  display: flex;
  flex-direction: column;
  box-sizing: border-box;
  height: 170px;
  border-right: 2px solid #dcdedc;
}
.group-body {
  display: flex;
  height: 135px;
}
.group-label {
  display: grid;
  grid-template-columns: 1fr;
  align-items: center;
  margin-top: 4px;
  height: 32px;
  text-align: center;
  font-size: 23.500px;
  color: #666;
}
.has-launcher {
  grid-template-columns: 1fr 14px;
  padding-right: 12px;
}
.launcher {
  fill: none;
  stroke: #aaa;
  stroke-width: 1.5;
}
.g-clip { width: 228px; padding-left: 20px; }
.g-clip .has-launcher { margin-left: -20px; }
.g-slides { width: 236px; padding-left: 13px; }
.g-slides .group-label { margin-left: -13px; }
.g-font { width: 445px; padding-left: 6px; }
.g-font .group-label { margin-left: -6px; }
.g-para { width: 587px; padding-left: 11px; }
.g-para .group-label { margin-left: -14px; }
.g-draw { width: 645px; padding-left: 11px; }
.g-draw .group-label { margin-left: -12px; }
.g-edit { width: 146px; padding-left: 14px; }
.g-edit .group-label { margin-left: -14px; }
.ribbon-end {
  flex: 1;
  display: flex;
  justify-content: flex-end;
  align-items: flex-end;
  padding: 0 19px 9px 0;
}
.collapse {
  fill: none;
  stroke: #555;
  stroke-width: 2.500;
}

.big {
  display: flex;
  flex-direction: column;
  align-items: center;
  padding-top: 4px;
}
.big svg {
  height: 62px;
  margin-top: 4px;
}
.big-label {
  display: flex;
  align-items: center;
  height: 28px;
  margin-top: -3px;
  font-size: 23.500px;
  white-space: nowrap;
  color: #444;
}
.big > .caret { margin-top: 13px; }
.big-paste { width: 56px; }
.big-paste svg { margin-bottom: 3px; }
.big-new { width: 86px; margin-right: 13px; }
.big-new .second { margin-top: 0; }
.big-new svg { margin-bottom: 3px; }
.big-arrange { width: 60px; margin-left: 18px; }
.big-style { width: 96px; margin-left: 16px; margin-right: 8px; }
.big-style .big-label { color: #aaa; }
.big-arrange svg, .big-style svg { margin-bottom: 3px; }

.col {
  display: flex;
  flex-direction: column;
}
.g-clip .col { margin-left: 20px; }
.sm {
  display: flex;
  align-items: center;
  box-sizing: border-box;
  height: 45px;
  padding-bottom: 3px;
  font-size: 23.500px;
  color: #444;
  white-space: nowrap;
}
.sm-ic {
  flex: none;
  margin-right: 6px;
}
.g-clip .sm-ic, .g-para .sm-ic { margin-right: 3px; }
.dim-col .sm { color: #a8a8a8; }
.caret {
  display: inline-block;
  flex: none;
  width: 0;
  height: 0;
  margin-left: 6px;
  border-left: 5px solid transparent;
  border-right: 5px solid transparent;
  border-top: 7px solid #555;
}
.caret.dim { border-top-color: #bbb; }
.caret.up {
  border-top: 0;
  border-bottom: 8px solid #555;
}
.caret.up.dim { border-bottom-color: #ccc; }
.caret-gap { margin-left: 20px; }

/* font group */
.stack {
  flex-direction: column;
  padding-top: 17px;
  box-sizing: border-box;
}
.font-row {
  display: flex;
  align-items: center;
  height: 43px;
  padding-left: 3px;
}
.second-row {
  height: 40px;
  margin-top: 17px;
  padding-left: 0;
  color: #9c9c9c;
}
.combo {
  display: flex;
  align-items: center;
  justify-content: space-between;
  box-sizing: border-box;
  height: 43px;
  background: #fff linear-gradient(to left, #e1e2e1 25px, transparent 25px);
  border: 1px solid #dadcda;
  color: #aaa;
  font-size: 24px;
}
.combo .caret { margin-right: 7px; }
.combo-name { width: 182px; justify-content: flex-end; }
.combo-size { width: 97px; padding-left: 4px; }
.grow {
  position: relative;
  margin-left: 10px;
  width: 32px;
  font-size: 36px;
  color: #9c9c9c;
  line-height: 43px;
}
.grow i {
  position: absolute;
  top: 8px;
  right: 0;
  border-left: 5px solid transparent;
  border-right: 5px solid transparent;
  border-bottom: 7px solid #aaa;
}
.grow i.down {
  border-bottom: 0;
  border-top: 7px solid #aaa;
}
.small { font-size: 30px; margin-left: 10px; }
.clear-ic { margin-left: 26px; }
.fbtn {
  width: 43px;
  text-align: center;
  font-size: 26px;
  font-style: normal;
}
em.fbtn { font-style: italic; font-family: "Liberation Serif", serif; }
b.fbtn { font-family: "Liberation Serif", serif; }
.shadowed { text-shadow: 2px 3px 2px #bbb; }
.abc { font-size: 22px; }
.av {
  display: flex;
  flex-direction: column;
  align-items: center;
  font-size: 22px;
  line-height: 24px;
}
.fcaret { margin: 0 3px 0 2px; }
.aa { margin-left: 7px; }
.bigger { font-size: 36px; margin-left: 8px; }
.vsep {
  flex: none;
  width: 2px;
  height: 44px;
  margin: 0 9px;
  background: #dfe1df;
}
.font-sep { margin: 0 8px 0 17px; }

/* paragraph group */
.para-left {
  flex: none;
  width: 320px;
  padding-top: 16px;
  box-sizing: border-box;
}
.para-row {
  display: flex;
  align-items: center;
  height: 40px;
}
.row-two { margin-top: 21px; }
.pi {
  flex: none;
  fill: none;
  stroke: #aeaeae;
  stroke-width: 2;
}
.gap7 { margin-left: 7px; }
.pcaret {
  margin: 0 10px;
}
.pcaret.narrow { margin: 0 5px; }
.sep-two { margin: 0 11px; }

/* shapes gallery */
.gallery {
  display: flex;
  flex: none;
  box-sizing: border-box;
  width: 265px;
  height: 118px;
  margin-top: 7px;
  background: #fff;
  border: 2px solid #cfd1cf;
}
.gallery-cells {
  display: grid;
  grid-template-columns: repeat(6, 39px);
  grid-auto-rows: 38px;
  flex: 1;
  padding: 1px 0 0 1px;
}
.si {
  width: 32px;
  height: 32px;
  margin: 3px;
  fill: none;
  stroke: #666;
  stroke-width: 2;
}
.gallery-scroll {
  display: flex;
  flex-direction: column;
  width: 26px;
  border-left: 1px solid #d8dad8;
}
.gs {
  display: flex;
  flex: 1;
  flex-direction: column;
  align-items: center;
  justify-content: center;
  gap: 4px;
  border-bottom: 1px solid #d8dad8;
}
.gs .caret { margin: 0; }
.gs-up { background: #e4e5e4; }
.gs-last { border-bottom: 0; }
.bar {
  width: 10px;
  height: 2px;
  background: #555;
}

.replace-ic {
  width: 30px;
  font-size: 18px;
  line-height: 15px;
  text-align: center;
  color: #5a6fc0;
}

/* main area */
.main {
  display: flex;
  height: 1104px;
  border-top: 3px solid #dcdedc;
  background: #e3e5e3;
}
.thumbs-pane {
  display: flex;
  flex: none;
  width: 319px;
  box-sizing: border-box;
  border-right: 2px solid #cdcfcd;
  padding-right: 8px;
}
.thumbs {
  flex: none;
  width: 282px;
  box-sizing: border-box;
  padding-top: 22px;
  overflow: hidden;
}
.thumb-row {
  display: flex;
  height: 105px;
  margin-bottom: 37.500px;
}
.num {
  width: 55px;
  box-sizing: border-box;
  padding-left: 8px;
  margin-top: -8px;
  font-size: 33px;
  line-height: 30px;
  color: #555;
}
.thumb {
  width: 184px;
  height: 105px;
  background: #fff;
  box-shadow: 0 0 0 1px #cfd1cf;
}
.thumb > * {
  filter: blur(1px);
  opacity: 0.85;
}
.row-active .num { color: #d2633c; }
.row-active .thumb { box-shadow: 0 0 0 5px #d2572a; }

.vscroll, .rscroll {
  display: flex;
  flex: none;
  flex-direction: column;
  align-items: stretch;
  width: 27px;
  background: #dfe1df;
}
.sb-btn {
  display: flex;
  align-items: center;
  justify-content: center;
  box-sizing: border-box;
  height: 27px;
  margin-top: 4px;
  background: #fff;
  border: 1px solid #c4c6c4;
}
.sb-btn .caret { margin: 0; }
.sb-thumb {
  height: 78px;
  margin-top: 171px;
  background: #fff;
  border: 1px solid #c4c6c4;
  box-sizing: border-box;
}
.sb-fill { flex: 1; }
.sb-down {
  height: 25px;
  margin: 0 0 7px;
}

.editor {
  display: flex;
  flex: 1;
  flex-direction: column;
}
.canvas {
  display: flex;
  flex: 1;
}
.canvas-area {
  flex: 1;
  padding: 30px 0 0 291px;
}
.rscroll {
  margin-right: 3px;
  margin-left: auto;
}
.r-up { height: 23px; margin-top: 7px; }
.r-thumb { height: 29px; margin-top: 192px; }
.r-down { height: 28px; margin: 0; }
.page-arrows {
  margin: 7px auto 33px;
  flex: none;
}
.notes {
  height: 64px;
  margin-left: 6px;
  border-top: 2px solid #cdcfcd;
  background: #e9ebe9;
  padding-left: 18px;
  font-size: 28px;
  line-height: 54px;
  color: #666;
}

/* slide */
.slide {
  position: relative;
  width: 1738px;
  height: 979px;
  background: #fff;
  box-shadow: 0 0 0 1px #d0d2d0;
}
.slide-head {
  display: flex;
  align-items: center;
  height: 77px;
  padding-left: 10px;
}
.slide-mark {
  flex: none;
  margin-top: 4px;
}
.slide-title {
  margin: 0 0 6px 55px;
  font-size: 48.500px;
  font-weight: 700;
  color: #111;
  white-space: nowrap;
}
.brand {
  display: flex;
  align-items: center;
  gap: 6px;
  margin-left: auto;
  padding-right: 38px;
  font-size: 45px;
  font-weight: 700;
  color: #1c7766;
}
.brand svg { margin-top: 6px; }
.slide-rule {
  height: 6px;
  background: #1c7260;
  box-shadow: 0 0 2px #7fd0bd;
}
.diagram {
  position: relative;
  display: flex;
  flex-direction: column;
  box-sizing: border-box;
  width: 1337px;
  height: 708px;
  margin: 27px 0 0 188px;
  border: 3px dotted #3c3c3c;
  font-weight: 600;
}
.young {
  height: 335px;
  box-sizing: border-box;
  padding-top: 42px;
  text-align: center;
  border-bottom: 3px dotted #3c3c3c;
}
.tenured {
  flex: 1;
  display: flex;
  justify-content: flex-end;
  align-items: flex-end;
  padding: 0 44px 14px 0;
  background: #cccecc;
}
.gen-label {
  font-size: 27px;
  color: #444;
}
.links {
  position: absolute;
  top: -1px;
  left: -3px;
  width: 1337px;
  height: 706px;
}
.link-solid path {
  fill: none;
  stroke: #333;
  stroke-width: 5;
}
.link-red path {
  fill: none;
  stroke: #f0323a;
  stroke-width: 5;
  stroke-dasharray: 14 7;
}
.link-green {
  fill: none;
  stroke: #18d02e;
  stroke-width: 6;
  stroke-dasharray: 15 7;
}
.node {
  position: absolute;
  display: flex;
  align-items: center;
  justify-content: center;
  box-sizing: border-box;
  text-align: center;
  font-size: 27px;
  font-weight: 700;
  line-height: 35px;
  color: #fff;
  border: 3px solid #2f4560;
}
.blue { background: #2b90fe; }
.orange { background: #ff8800; border-color: #6f4a1c; }
.pink { background: #ff1f7c; border-color: #8c3358; }
.n-serial { left: 97px; top: 136px; width: 233px; height: 120px; }
.n-parnew { left: 425px; top: 136px; width: 278px; height: 120px; }
.n-scav { left: 805px; top: 136px; width: 271px; height: 120px; }
.n-g1 { left: 1184px; top: 241px; width: 117px; height: 180px; }
.n-cms {
  left: 107px;
  top: 401px;
  width: 253px;
  height: 118px;
  border: 4px dashed #3fd2dc;
  background-clip: padding-box;
}
.n-sold { left: 492px; top: 524px; width: 270px; height: 116px; }
.n-pold { left: 859px; top: 423px; width: 272px; height: 117px; }
.slogan {
  position: absolute;
  right: 49px;
  bottom: 23px;
  font-size: 38px;
  font-style: italic;
  color: #e1e2e1;
  white-space: nowrap;
}

/* status bar */
.statusbar {
  display: flex;
  align-items: center;
  height: 40px;
  background: #edefed;
  font-size: 23px;
  color: #555;
  white-space: nowrap;
}
.statusbar > span { padding-bottom: 5px; }
.st-count {
  padding-left: 14px;
  width: 334px;
  box-sizing: border-box;
  letter-spacing: 1.100px;
}
.st-book {
  fill: none;
  stroke: #666;
  stroke-width: 2;
}
.st-lang { margin-left: 33px; font-size: 24px; }
.st-spacer { flex: 1; }
.st-item {
  display: flex;
  align-items: center;
  gap: 9px;
}
.st-comment { margin-left: 41px; margin-right: 37px; }
.st-ic {
  fill: none;
  stroke: #777;
  stroke-width: 2;
}
.statusbar .st-view {
  display: flex;
  align-items: center;
  justify-content: center;
  width: 74px;
  height: 40px;
  padding: 0;
  background: #c6c8c6;
}
.st-sorter {
  display: flex;
  justify-content: center;
  width: 59px;
}
.ime {
  display: flex;
  align-items: center;
  justify-content: space-between;
  box-sizing: border-box;
  width: 287px;
  height: 44px;
  margin-bottom: -4px;
  padding: 0 12px 0 6px;
  background: #f2f9fd;
}
.ime-zh {
  font-size: 30px;
  line-height: 38px;
  font-weight: 500;
  color: #3f8fd8;
}
.ime-punct {
  font-size: 28px;
  line-height: 38px;
  color: #3f8fd8;
}
.zoom {
  display: flex;
  align-items: center;
  width: 269px;
  padding-left: 4px;
  box-sizing: border-box;
}
.zoom-track {
  position: relative;
  width: 96px;
  height: 2px;
  background: #aaa;
}
.zoom-track i {
  position: absolute;
  left: 0;
  top: -8px;
  width: 2px;
  height: 18px;
  background: #888;
}
.zoom-plus {
  margin-left: 6px;
  width: 30px;
  font-size: 32px;
  font-weight: 700;
  line-height: 30px;
  color: #666;
}
.zoom-val {
  margin-left: 10px;
  font-size: 25px;
  color: #666;
}
.zoom .st-ic { margin-left: 26px; }
.statusbar-edge {
  flex: 1;
  background: #2c2c2c;
}

/* things painted over the window by the recording */
.titlebar::before {
  content: "";
  position: absolute;
  top: 0;
  left: 2197px;
  width: 400px;
  height: 3px;
  background: #2db28c;
}
.pointer-spot {
  position: absolute;
  left: 354px;
  top: 578px;
  width: 92px;
  height: 98px;
  border-radius: 50%;
  background: #ebdc00;
}
.pointer-streak {
  position: absolute;
  left: 498px;
  top: 619px;
  width: 20px;
  height: 5px;
  border-radius: 50%;
  background: #efe27a;
}
.pointer {
  position: absolute;
  left: 401px;
  top: 628px;
}
.corner-arc {
  position: absolute;
  left: 28px;
  top: 1431px;
  width: 49px;
  height: 49px;
  box-sizing: border-box;
  border: 2px solid #9fc2d8;
  border-radius: 50%;
  background: #dfe9ef;
}
.mark-site {
  position: absolute;
  left: 30px;
  top: 1336px;
  font-size: 46px;
  line-height: 56px;
  font-weight: 700;
  color: rgba(255, 255, 255, 0.4);
}
.mark-id {
  position: absolute;
  left: 230px;
  top: 1375px;
  font-size: 20px;
  line-height: 22px;
  color: rgba(255, 255, 255, 0.3);
  white-space: nowrap;
}
```
